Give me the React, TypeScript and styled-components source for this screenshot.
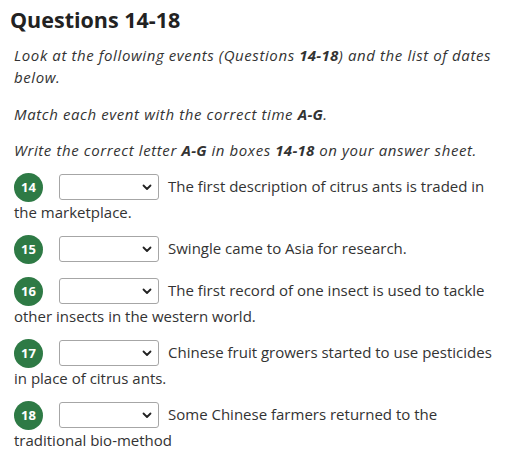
import React from "react";
import styled, { createGlobalStyle } from "styled-components";

const Global = createGlobalStyle`
  html, body { margin: 0; padding: 0; background: #ffffff; }
  body { font-family: "Open Sans", "Lato", sans-serif; color: #333333; }
`;

const Page = styled.div`
  padding: 6px 14px 0 14px;
`;

const Heading = styled.h2`
  font-family: "Open Sans", sans-serif;
  font-weight: 700;
  font-size: 21.5px;
  line-height: 28px;
  margin: 0 0 10px -4px;
  color: #222222;
`;

const Instructions = styled.div`
  display: flex;
  flex-direction: column;
  gap: 14.5px;
  margin-bottom: 11.5px;
`;

const Para = styled.p`
  font-size: 15px;
  line-height: 22px;
  letter-spacing: 0.6px;
  margin: 0;
  font-style: italic;

  b {
    letter-spacing: 0.3px;
  }
`;

const Question = styled.div`
  font-size: 15px;
  line-height: 20px;
  margin: 0 0 13px 0;
`;

const Badge = styled.span`
  display: inline-flex;
  align-items: center;
  justify-content: center;
  width: 29px;
  height: 29px;
  line-height: 1;
  border-radius: 50%;
  background: #2e7a45;
  color: #ffffff;
  font-weight: 700;
  font-size: 13px;
  vertical-align: middle;
  margin-right: 16px;
`;

const SelectBox = styled.span`
  display: inline-flex;
  align-items: center;
  justify-content: flex-end;
  box-sizing: border-box;
  width: 100px;
  height: 26px;
  border: 1px solid #a6a6a6;
  border-radius: 3px;
  background: #fff;
  padding-right: 6px;
  vertical-align: middle;
  margin-right: 9px;
`;

const questions = [
  { n: 14, text: "The first description of citrus ants is traded in the marketplace." },
  { n: 15, text: "Swingle came to Asia for research." },
  { n: 16, text: "The first record of one insect is used to tackle other insects in the western world." },
  { n: 17, text: "Chinese fruit growers started to use pesticides in place of citrus ants." },
  { n: 18, text: "Some Chinese farmers returned to the traditional bio-method" },
];

const Chevron = () => (
  <svg width="10" height="7" viewBox="0 0 10 7">
    <path d="M1.5 1.5 L5 5 L8.5 1.5" fill="none" stroke="#222" strokeWidth="1.8" strokeLinecap="round" strokeLinejoin="round" />
  </svg>
);

export default function App() {
  return (
    <Page>
      <Global />
      <Heading>Questions 14-18</Heading>
      <Instructions>
        <Para>
          Look at the following events (Questions <b>14-18</b>) and the list of dates below.
        </Para>
        <Para>
          Match each event with the correct time <b>A-G</b>.
        </Para>
        <Para>
          Write the correct letter <b>A-G</b> in boxes <b>14-18</b> on your answer sheet.
        </Para>
      </Instructions>
      {questions.map((q) => (
        <Question key={q.n}>
          <Badge>{q.n}</Badge>
          <SelectBox>
            <Chevron />
          </SelectBox>
          {q.text}
        </Question>
      ))}
    </Page>
  );
}
